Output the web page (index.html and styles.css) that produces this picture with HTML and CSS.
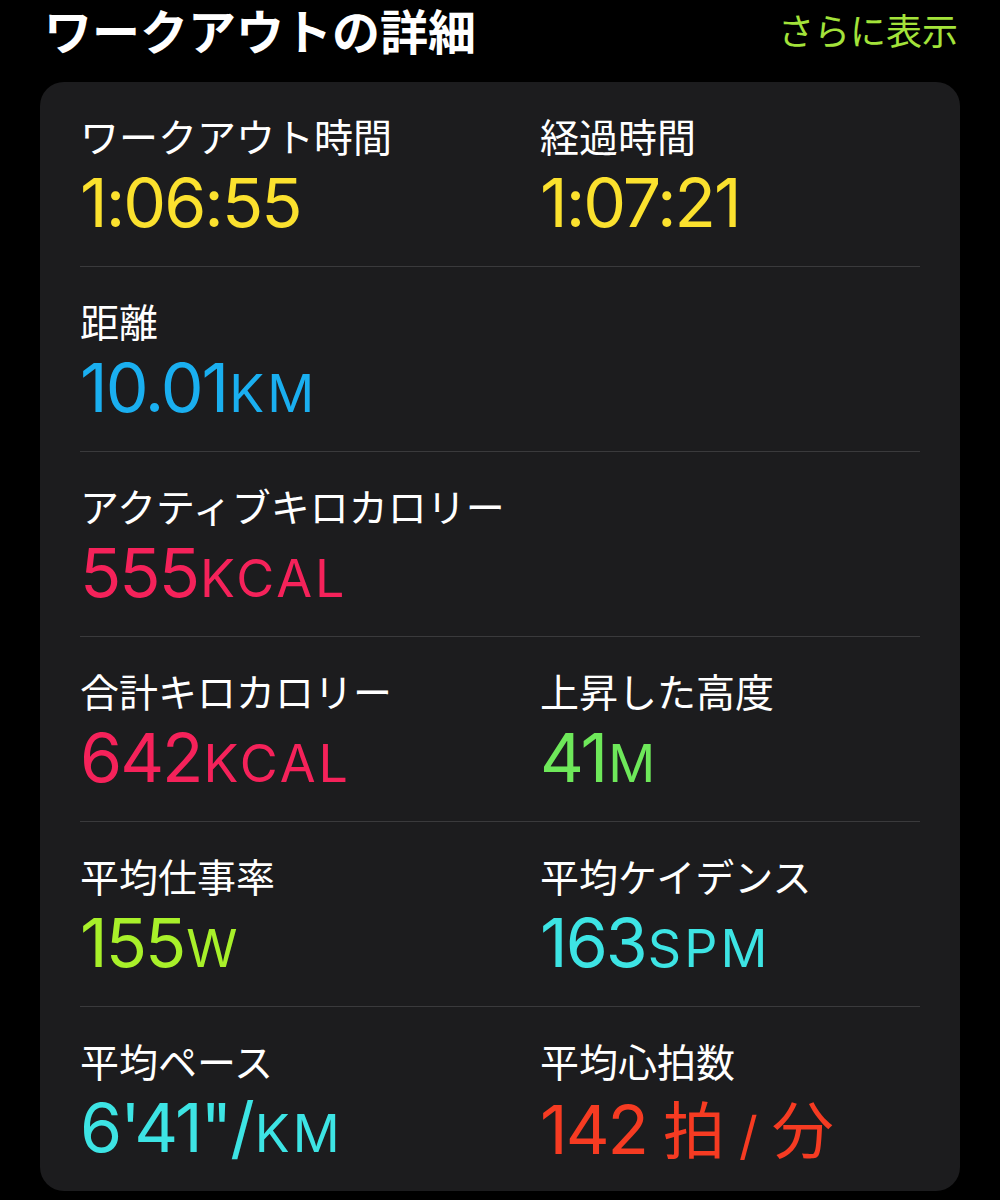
FILE: index.html
```html
<!DOCTYPE html>
<html lang="ja">
<head>
    <meta charset="UTF-8">
    <meta name="viewport" content="width=device-width, initial-scale=1.0">
    <title>ワークアウトの詳細</title>
    <link rel="stylesheet" href="styles.css">
</head>
<body>
    <header class="section-head">
        <h1>ワークアウトの詳細</h1>
        <a class="more" href="#">さらに表示</a>
    </header>

    <main class="card">
        <div class="row">
            <div class="stat">
                <div class="label">ワークアウト時間</div>
                <div class="value yellow">1:06:55</div>
            </div>
            <div class="stat">
                <div class="label">経過時間</div>
                <div class="value yellow">1:07:21</div>
            </div>
        </div>

        <div class="row">
            <div class="stat">
                <div class="label">距離</div>
                <div class="value blue">10.01<span class="unit">KM</span></div>
            </div>
        </div>

        <div class="row">
            <div class="stat">
                <div class="label">アクティブキロカロリー</div>
                <div class="value pink">555<span class="unit">KCAL</span></div>
            </div>
        </div>

        <div class="row">
            <div class="stat">
                <div class="label">合計キロカロリー</div>
                <div class="value pink">642<span class="unit">KCAL</span></div>
            </div>
            <div class="stat">
                <div class="label">上昇した高度</div>
                <div class="value green">41<span class="unit">M</span></div>
            </div>
        </div>

        <div class="row">
            <div class="stat">
                <div class="label">平均仕事率</div>
                <div class="value lime">155<span class="unit">W</span></div>
            </div>
            <div class="stat">
                <div class="label">平均ケイデンス</div>
                <div class="value cyan">163<span class="unit">SPM</span></div>
            </div>
        </div>

        <div class="row">
            <div class="stat">
                <div class="label">平均ペース</div>
                <div class="value cyan">6'41"/<span class="unit">KM</span></div>
            </div>
            <div class="stat">
                <div class="label">平均心拍数</div>
                <div class="value red">142<span class="unit-jp">拍<span class="slash">/</span>分</span></div>
            </div>
        </div>
    </main>
</body>
</html>
```

FILE: styles.css
```css
body {
    margin: 0;
    padding: 0;
    background-color: #000;
    color: #fff;
    font-family: 'Noto Sans CJK JP', 'Noto Sans', sans-serif;
}

.section-head {
    display: flex;
    justify-content: space-between;
    align-items: flex-start;
    padding: 0 42px 0 44px;
}

.section-head h1 {
    margin: 0;
    font-size: 48px;
    font-weight: 700;
    line-height: 58px;
}

.more {
    color: #a3e33a;
    text-decoration: none;
    font-size: 36px;
    line-height: 58px;
}

.card {
    margin: 24px 40px 0;
    padding: 0 40px;
    background-color: #1c1c1e;
    border-radius: 24px;
}

.row {
    display: grid;
    grid-template-columns: 460px 1fr;
    height: 185px;
    padding-top: 30px;
    box-sizing: border-box;
    border-top: 1px solid #3a3a3c;
}

.row:first-child {
    height: 184px;
    border-top: none;
}

.label {
    font-size: 39px;
    line-height: 46px;
}

.value {
    margin-top: 4px;
    font-family: 'Inter', 'Liberation Sans', sans-serif;
    font-size: 68px;
    line-height: 80px;
    letter-spacing: -2px;
}

.unit {
    font-size: 52px;
    letter-spacing: 3px;
    margin-left: 2px;
}

.unit-jp {
    font-family: 'Noto Sans CJK JP', sans-serif;
    font-size: 62px;
    margin-left: 16px;
    letter-spacing: 0;
}

.slash {
    font-family: 'Inter', sans-serif;
    font-size: 52px;
    margin: 0 14px;
}

.yellow { color: #fbe12e; }
.blue { color: #1aaff0; }
.pink { color: #f5225a; }
.green { color: #6ee85a; }
.lime { color: #a8f02a; }
.cyan { color: #3de4e4; }
.red { color: #f63b22; }
```
